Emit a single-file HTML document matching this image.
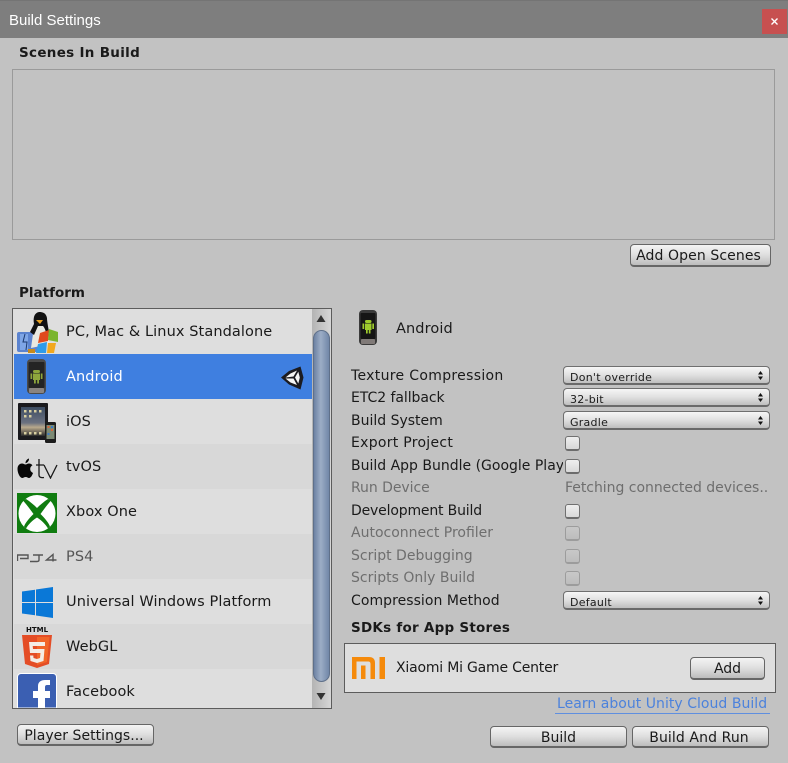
<!DOCTYPE html>
<html><head><meta charset="utf-8"><style>
html,body{margin:0;padding:0;width:788px;height:763px;overflow:hidden;background:#c2c2c2}
body{position:relative;font-family:"DejaVu Sans","Liberation Sans",sans-serif;font-size:14px;color:#1a1a1a}
.a{position:absolute}
.t{position:absolute;white-space:nowrap;line-height:20px;height:20px}
.dis{color:#6e6e6e}
.b{font-weight:bold}
.btn{position:absolute;box-sizing:border-box;border:1px solid #666;border-bottom:2px solid #666;border-radius:4px;background:linear-gradient(#f4f4f4,#dedede 50%,#bcbcbc);text-align:center;white-space:nowrap;height:22px;line-height:21px}
.sel{position:absolute;left:563px;width:207px;height:19px;box-sizing:border-box;border:1px solid #6f6f6f;border-bottom:2px solid #6a6a6a;border-radius:4px;background:linear-gradient(#f6f6f6,#e0e0e0 50%,#bfbfbf);font-size:11px;line-height:21px;padding-left:6px;letter-spacing:.25px;overflow:hidden}
.ar{position:absolute;left:758px}
.cb{position:absolute;left:565px;width:15px;height:15px;box-sizing:border-box;border:1px solid #707070;border-bottom:2px solid #6c6c6c;border-radius:3px;background:linear-gradient(#eee,#d8d8d8)}
.cb.d{border-color:#9c9c9c;background:linear-gradient(#c8c8c8,#bdbdbd)}
.row{position:absolute;left:14px;width:298px;height:45px}
.row .t{left:52px;top:13px;font-size:14.5px;letter-spacing:.1px}
</style></head><body>
<div class="a" style="left:0;top:0;width:788px;height:38px;background:#7e7e7e;border-top:1px solid #747474;box-sizing:border-box"></div>
<div class="t" style="left:9px;top:11px;color:#fff;font-family:'Liberation Sans',sans-serif;font-size:15px">Build Settings</div>
<div class="a" style="left:762px;top:9px;width:25px;height:25px;background:#c75050"></div>
<svg class="a" style="left:771px;top:18px" width="7" height="7" viewBox="0 0 7 7"><path d="M.5 .5L6.500 6.500M6.500 .5L.5 6.500" stroke="#fff" stroke-width="1.400"/></svg>

<div class="t b" style="left:19px;top:43px;font-size:13.500px;letter-spacing:.3px">Scenes In Build</div>
<div class="a" style="left:12px;top:69px;width:763px;height:171px;box-sizing:border-box;border:1px solid #9a9a9a;background:#c2c2c2"></div>
<div class="btn" style="left:630px;top:244px;width:141px;height:23px;line-height:23px;letter-spacing:.1px;padding-right:4px">Add Open Scenes</div>
<div class="t b" style="left:19px;top:283px;font-size:13.500px;letter-spacing:0">Platform</div>

<!-- list -->
<div class="a" style="left:12px;top:308px;width:320px;height:401px;box-sizing:border-box;border:1px solid #5c5c5c;background:#dedede"></div>
<div class="row" style="top:309px;background:#dedede"><div class="t">PC, Mac &amp; Linux Standalone</div></div>
<div class="row" style="top:354px;background:#3f7fe0"><div class="t" style="color:#fff">Android</div></div>
<div class="row" style="top:399px;background:#dedede"><div class="t">iOS</div></div>
<div class="row" style="top:444px;background:#d8d8d8"><div class="t">tvOS</div></div>
<div class="row" style="top:489px;background:#dedede"><div class="t">Xbox One</div></div>
<div class="row" style="top:534px;background:#d8d8d8"><div class="t" style="color:#555">PS4</div></div>
<div class="row" style="top:579px;background:#dedede"><div class="t">Universal Windows Platform</div></div>
<div class="row" style="top:624px;background:#d8d8d8"><div class="t">WebGL</div></div>
<div class="row" style="top:669px;height:39px;background:#dedede"><div class="t">Facebook</div></div>

<!-- scrollbar -->
<div class="a" style="left:312px;top:309px;width:19px;height:399px;background:linear-gradient(90deg,#b4b4b4,#d6d6d6)"></div>
<div class="a" style="left:313px;top:330px;width:17px;height:352px;box-sizing:border-box;border:1px solid #5f708a;border-radius:9px;background:linear-gradient(90deg,#6d82a3,#9cadc6 45%,#7187a8)"></div>
<svg class="a" style="left:316px;top:315px" width="10" height="8"><path d="M5 0L9.500 7H.5Z" fill="#333"/></svg>
<svg class="a" style="left:316px;top:693px" width="10" height="8"><path d="M.5 0H9.500L5 7Z" fill="#333"/></svg>

<!-- PC icon -->
<svg class="a" style="left:16px;top:312px" width="42" height="42" viewBox="0 0 42 42">
<rect x="1" y="20" width="21" height="20" rx="2" fill="#5b83cf"/><path d="M4 22h8v16H4z" fill="#7fa6e6"/><path d="M9 22L7 30H11L10 38" stroke="#1c3a70" fill="none"/>
<path d="M15 36L18 15C18 7 18 2 23 1C29 1 29 8 29 15L34 32Z" fill="#e8e8e0"/>
<path d="M23 0C18 1 17 6 18 12L14 20L18 23L22 14H27C29 16 30 20 31 24L33 20C32 14 31 9 31 6C30 1 27 0 23 0Z" fill="#111"/>
<path d="M20 8h7l-3 4z" fill="#e8a020"/>
<path d="M24 21L33 18L32 29L22 31Z" fill="#e04a1c"/><path d="M33 17L42 20V30L32 28Z" fill="#7ab52e"/>
<path d="M22 32L31 30L30 41L20 41Z" fill="#2f9be8"/><path d="M32 31L40 31L38 41L31 41Z" fill="#f2a81e"/>
<rect x="12" y="37" width="7" height="4" fill="#c78a1a"/>
</svg>
<!-- Android icon -->
<svg class="a" style="left:26px;top:359px" width="22" height="36" viewBox="0 0 22 36">
<rect x="1" y="0" width="19" height="35" rx="4" fill="#4a4a4a"/><rect x="2.500" y="3" width="16" height="26" rx="1" fill="#242424"/><rect x="3" y="29" width="15" height="5" rx="1" fill="#8a8480"/>
<g fill="#8ea63c"><rect x="7" y="11" width="7" height="3" rx="1.500"/><rect x="7" y="14.500" width="7" height="6.500"/><rect x="4.500" y="14.500" width="1.700" height="5.500"/><rect x="14.800" y="14.500" width="1.700" height="5.500"/><rect x="8" y="21" width="1.800" height="3.500"/><rect x="11.200" y="21" width="1.800" height="3.500"/></g>
</svg>
<!-- Unity logo -->
<svg class="a" style="left:281px;top:366px" width="23" height="24" viewBox="0 0 23 24">
<path d="M0 11.500L8 5L19.500 .5L22.500 11.500L19.500 23.500L8 18.500Z" fill="#1b1b20"/>
<path d="M4.500 11.500L9.500 7.500L16 4.500L12.500 10.500Z" fill="#f5f5f5"/>
<path d="M4.500 12.500L12.500 12.500L16 19L9.500 16.500Z" fill="#f5f5f5"/>
<path d="M14 11.500L17.300 5.800L18.800 11.500L17.300 17.500Z" fill="#f5f5f5"/>
</svg>
<!-- iOS icon -->
<svg class="a" style="left:17px;top:402px" width="40" height="41" viewBox="0 0 40 41">
<defs><linearGradient id="ip" x1="0" y1="0" x2="0" y2="1"><stop offset="0" stop-color="#3c4c62"/><stop offset=".55" stop-color="#6c7280"/><stop offset=".7" stop-color="#b9a98c"/><stop offset="1" stop-color="#2a2a2a"/></linearGradient></defs>
<rect x="1" y="1" width="30" height="37" rx="1" fill="#1a1a1e"/><rect x="4" y="5" width="24" height="29" fill="url(#ip)"/>
<g fill="#d8cfa0"><rect x="7" y="8" width="2.500" height="2.500"/><rect x="12" y="8" width="2.500" height="2.500"/><rect x="17" y="8" width="2.500" height="2.500"/><rect x="22" y="8" width="2.500" height="2.500"/><rect x="7" y="13" width="2.500" height="2.500"/><rect x="12" y="13" width="2.500" height="2.500"/><rect x="7" y="30" width="2.500" height="2.500"/><rect x="12" y="30" width="2.500" height="2.500"/><rect x="17" y="30" width="2.500" height="2.500"/><rect x="22" y="30" width="2.500" height="2.500"/></g>
<rect x="28" y="20" width="11" height="21" rx="1.500" fill="#1c1c1c"/><rect x="29.500" y="23" width="8" height="14" fill="#7c8a74"/>
<g fill="#d8643c"><rect x="30.500" y="24" width="2" height="2"/><rect x="34" y="27" width="2" height="2"/></g><g fill="#3a78c8"><rect x="34" y="24" width="2" height="2"/><rect x="30.500" y="31" width="2" height="2"/></g>
</svg>
<!-- tvOS icon -->
<svg class="a" style="left:17px;top:458px" width="41" height="21" viewBox="0 0 41 21">
<path d="M12 5.500C10.500 5.500 9.500 6.500 8.500 6.500C7.500 6.500 6.500 5.500 5 5.500C2.500 5.500 .5 7.500 .5 11C.5 15 3 20 5.200 20C6.500 20 7 19 8.700 19C10.300 19 10.800 20 12 20C14 20 15.500 16.500 16 15C14 14 13.200 12.500 13.200 11C13.200 9.500 14 8.300 15.500 7.300C14.500 6 13.200 5.500 12 5.500Z" fill="#080808"/>
<path d="M8.500 5.200C8.400 3 10 1 12 .5C12.200 2.800 10.500 4.800 8.500 5.200Z" fill="#080808"/>
<path d="M22 1V17C22 19 23.500 20 27 19.500M19 7H27M27 7L33.500 20L40 7" stroke="#181818" stroke-width="1.300" fill="none"/>
</svg>
<!-- Xbox icon -->
<svg class="a" style="left:17px;top:493px" width="40" height="40" viewBox="0 0 40 40">
<rect width="40" height="40" fill="#107c10"/><circle cx="20" cy="20.500" r="18.500" fill="#fff"/>
<path d="M6 7.500C9 11 13 16 16.500 21C12 25.500 8.500 29.500 7 33.500L9 35.500C11.500 31 16 27 20 24.500C24 27 28.500 31 31 35.500L33 33.500C31.500 29.500 28 25.500 23.500 21C27 16 31 11 34 7.500L31 6C27 8.500 23 12 20 15C17 12 13 8.500 9 6Z" fill="#107c10"/>
</svg>
<!-- PS4 icon -->
<svg class="a" style="left:17px;top:552px" width="40" height="11" viewBox="0 0 40 11">
<path d="M.5 9V3H11V6.500H3M16 3H26M22 3V8C22 9 21 9.500 20 9.500H13M39.500 8H29.500L36 2.500V9.500" stroke="#555" stroke-width="1.400" fill="none"/>
</svg>
<!-- UWP icon -->
<svg class="a" style="left:22px;top:587px" width="31" height="31" viewBox="0 0 31 31">
<path d="M0 4.500L13 2.700V15H0ZM14 2.500L31 0V15H14ZM0 16H13V28.300L0 26.500ZM14 16H31V31L14 28.500Z" fill="#0a78d7"/>
</svg>
<!-- HTML5 icon -->
<div class="a" style="left:22px;top:625px;width:30px;height:10px;font-size:7px;line-height:10px;text-align:center;color:#111;font-family:'DejaVu Sans',sans-serif;font-weight:bold;letter-spacing:0">HTML</div>
<svg class="a" style="left:22px;top:635px" width="30" height="33" viewBox="0 0 30 33">
<path d="M0 0H30L27 29L15 33L3 29Z" fill="#e44d26"/><path d="M15 2V30L25 27L27.500 2Z" fill="#f16529"/>
<path d="M23 7H7L8 18H18.500L18 23L15 24L11.500 23L11.300 20.500H8L8.500 26L15 28L21.500 26L22.500 14H11L10.700 11H23Z" fill="#f4ece6"/>
</svg>
<!-- Facebook icon -->
<div class="a" style="left:17px;top:673px;width:40px;height:35px;overflow:hidden">
<svg width="40" height="35" viewBox="0 0 40 35" style="display:block"><path d="M.5 35V4C.5 2 2 .5 4 .5H36C38 .5 39.500 2 39.500 4V35Z" fill="#3b5fb2" stroke="#fff"/>
<path d="M21 35V25H16V18H21V13C21 9 24 7 28 7H33V12H30C28.500 12 28 13 28 14V18H33V25H28V35Z" fill="#fff"/></svg>
</div>

<!-- right -->
<svg class="a" style="left:358px;top:310px" width="21" height="36" viewBox="0 0 21 36">
<rect x="1" y="0" width="18" height="35" rx="4" fill="#3a3a3a"/><rect x="2.500" y="3" width="15" height="26" rx="1" fill="#151515"/><rect x="3" y="29" width="14" height="5" rx="1" fill="#807a78"/>
<g fill="#9ecb2d"><rect x="7" y="10" width="6.500" height="3" rx="1.500"/><rect x="7" y="13.500" width="6.500" height="6.500"/><rect x="4.500" y="13.500" width="1.700" height="5.500"/><rect x="14.300" y="13.500" width="1.700" height="5.500"/><rect x="8" y="20" width="1.700" height="3.500"/><rect x="10.800" y="20" width="1.700" height="3.500"/></g>
</svg>
<div class="t" style="left:396px;top:319px;font-size:14.500px;letter-spacing:.1px">Android</div>

<div class="t" style="left:351px;top:366px;letter-spacing:.32px">Texture Compression</div>
<div class="t" style="left:351px;top:388px;letter-spacing:-.05px">ETC2 fallback</div>
<div class="t" style="left:351px;top:411px">Build System</div>
<div class="t" style="left:351px;top:433px;letter-spacing:.28px">Export Project</div>
<div class="t" style="left:351px;top:456px;width:212px;overflow:hidden">Build App Bundle (Google Play)</div>
<div class="t dis" style="left:351px;top:478px;letter-spacing:-.05px">Run Device</div>
<div class="t dis" style="left:565px;top:478px;width:204px;overflow:hidden;letter-spacing:-.03px">Fetching connected devices..</div>
<div class="t" style="left:351px;top:501px;letter-spacing:-.17px">Development Build</div>
<div class="t dis" style="left:351px;top:523px">Autoconnect Profiler</div>
<div class="t dis" style="left:351px;top:546px">Script Debugging</div>
<div class="t dis" style="left:351px;top:568px">Scripts Only Build</div>
<div class="t" style="left:351px;top:591px;letter-spacing:.05px">Compression Method</div>
<div class="t b" style="left:351px;top:618px;font-size:13.500px;letter-spacing:.25px">SDKs for App Stores</div>

<div class="sel" style="top:366px">Don't override</div>
<div class="sel" style="top:388px">32-bit</div>
<div class="sel" style="top:411px">Gradle</div>
<div class="sel" style="top:591px">Default</div>
<svg class="ar" style="top:371px" width="5" height="9"><path d="M2.500 0L5 3.500H0ZM0 5.500H5L2.500 9Z" fill="#111"/></svg>
<svg class="ar" style="top:393px" width="5" height="9"><path d="M2.500 0L5 3.500H0ZM0 5.500H5L2.500 9Z" fill="#111"/></svg>
<svg class="ar" style="top:416px" width="5" height="9"><path d="M2.500 0L5 3.500H0ZM0 5.500H5L2.500 9Z" fill="#111"/></svg>
<svg class="ar" style="top:596px" width="5" height="9"><path d="M2.500 0L5 3.500H0ZM0 5.500H5L2.500 9Z" fill="#111"/></svg>

<div class="cb" style="top:436px"></div>
<div class="cb" style="top:459px"></div>
<div class="cb" style="top:504px"></div>
<div class="cb d" style="top:526px"></div>
<div class="cb d" style="top:549px"></div>
<div class="cb d" style="top:571px"></div>

<!-- SDK box -->
<div class="a" style="left:344px;top:643px;width:432px;height:50px;box-sizing:border-box;border:1px solid #5c5c5c;background:#dedede"></div>
<svg class="a" style="left:352px;top:657px" width="34" height="22" viewBox="0 0 34 22">
<path d="M0 0H17C21 0 23 2 23 6V22H18.500V7C18.500 5 17.500 4.500 16 4.500H4.500V22H0ZM9 8.500H13.500V22H9ZM27.500 0H33V22H27.500Z" fill="#f58a0b"/>
</svg>
<div class="t" style="left:396px;top:658px;font-size:14px;letter-spacing:-.2px">Xiaomi Mi Game Center</div>
<div class="btn" style="left:690px;top:657px;width:75px;height:23px;line-height:23px">Add</div>

<div class="t" style="left:557px;top:694px;color:#4c82dc;letter-spacing:.03px">Learn about Unity Cloud Build</div>
<div class="a" style="left:555px;top:713px;width:215px;height:1px;background:#5f8fe0"></div>

<div class="btn" style="left:17px;top:724px;width:137px;line-height:22px;padding-right:3px;letter-spacing:.03px">Player Settings...</div>
<div class="btn" style="left:490px;top:726px;width:137px;line-height:23px">Build</div>
<div class="btn" style="left:632px;top:726px;width:137px;line-height:23px;letter-spacing:.1px;padding-right:3px">Build And Run</div>
</body></html>
